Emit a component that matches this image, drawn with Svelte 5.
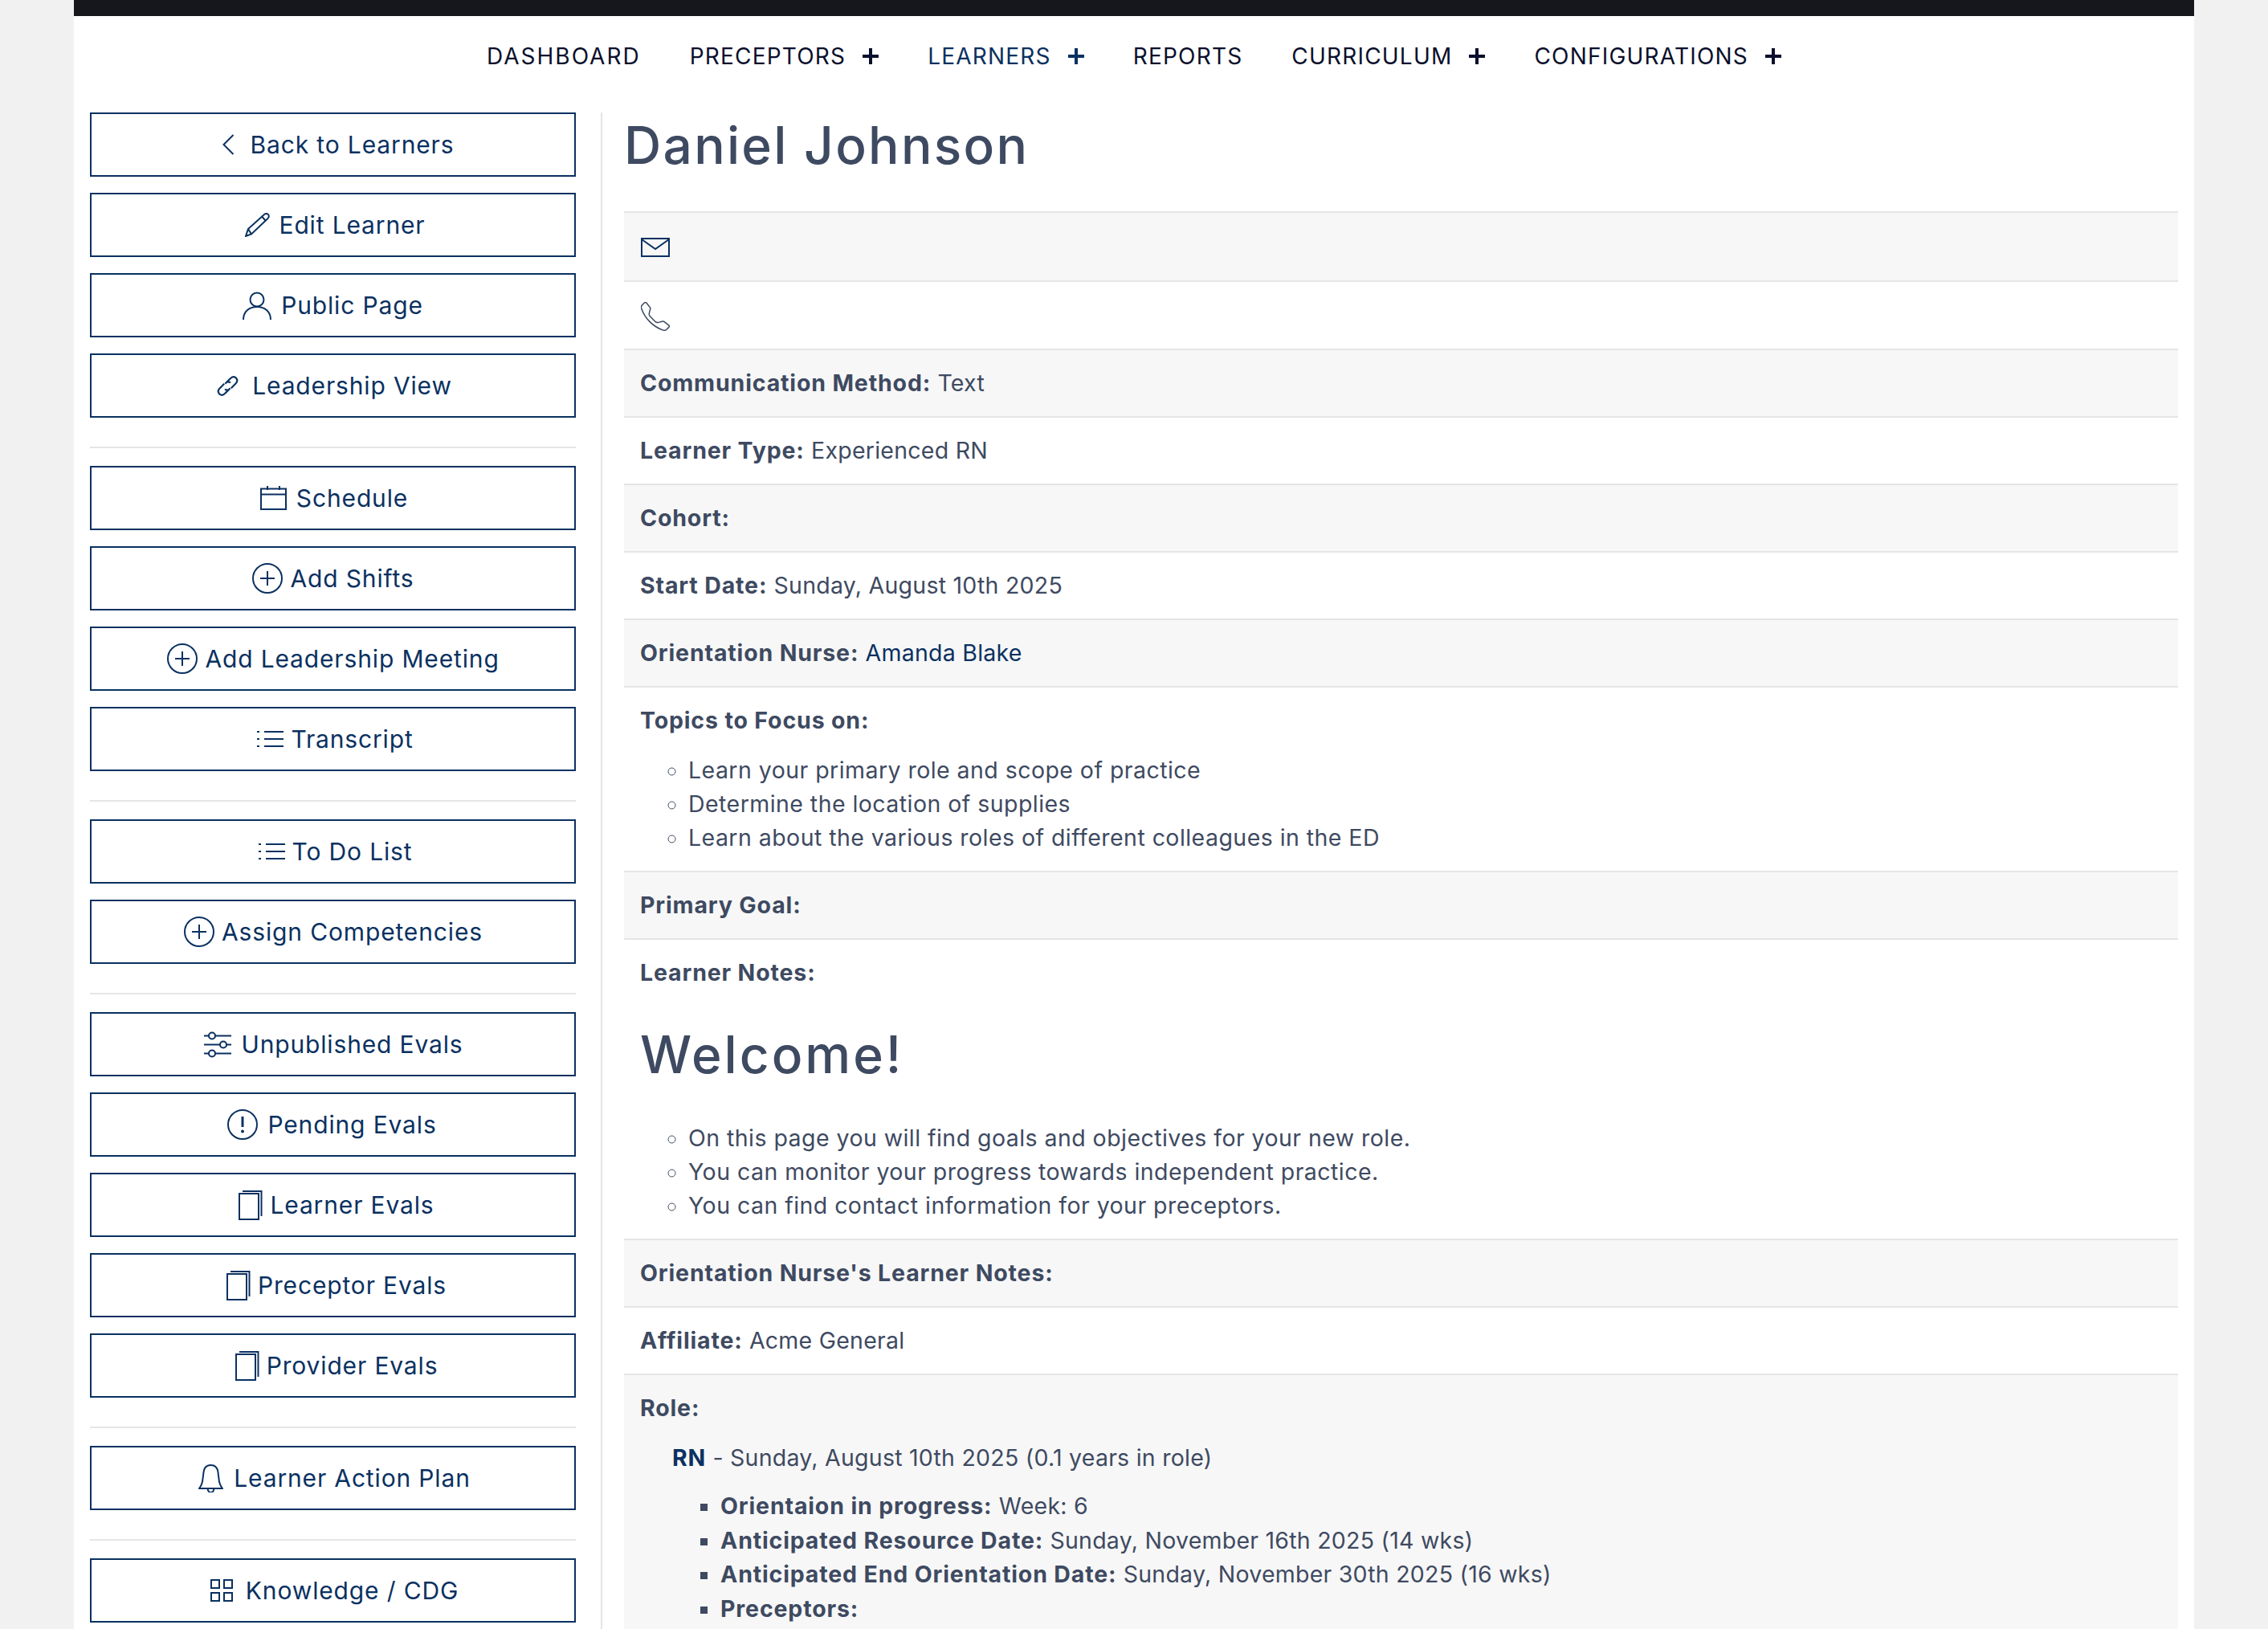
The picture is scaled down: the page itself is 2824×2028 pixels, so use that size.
<script>
	const nav = [
		{ label: 'DASHBOARD' },
		{ label: 'PRECEPTORS', plus: true },
		{ label: 'LEARNERS', plus: true, active: true },
		{ label: 'REPORTS' },
		{ label: 'CURRICULUM', plus: true },
		{ label: 'CONFIGURATIONS', plus: true }
	];

	const groups = [
		[
			{ label: 'Back to Learners', icon: 'back' },
			{ label: 'Edit Learner', icon: 'pencil' },
			{ label: 'Public Page', icon: 'person' },
			{ label: 'Leadership View', icon: 'link' }
		],
		[
			{ label: 'Schedule', icon: 'calendar' },
			{ label: 'Add Shifts', icon: 'plus' },
			{ label: 'Add Leadership Meeting', icon: 'plus' },
			{ label: 'Transcript', icon: 'list' }
		],
		[
			{ label: 'To Do List', icon: 'list' },
			{ label: 'Assign Competencies', icon: 'plus' }
		],
		[
			{ label: 'Unpublished Evals', icon: 'sliders' },
			{ label: 'Pending Evals', icon: 'alert' },
			{ label: 'Learner Evals', icon: 'pages' },
			{ label: 'Preceptor Evals', icon: 'pages' },
			{ label: 'Provider Evals', icon: 'pages' }
		],
		[{ label: 'Learner Action Plan', icon: 'bell' }],
		[{ label: 'Knowledge / CDG', icon: 'grid' }]
	];

	const topics = [
		'Learn your primary role and scope of practice',
		'Determine the location of supplies',
		'Learn about the various roles of different colleagues in the ED'
	];

	const welcome = [
		'On this page you will find goals and objectives for your new role.',
		'You can monitor your progress towards independent practice.',
		'You can find contact information for your preceptors.'
	];
</script>

{#snippet icon(name)}
	{#if name === 'back'}
		<svg class="ic gap-back" width="15" height="26" viewBox="0 0 15 26"><path d="M13.5 1 L1.5 13 L13.5 25" /></svg>
	{:else if name === 'pencil'}
		<svg class="ic" width="31" height="30" viewBox="0 0 31 30"><path d="M1 29 L4 20 L24 2 Q27 0 29 2 Q31 5 28 7.5 L8 26.5 Z M4 20 L8 26.5 M21 4.5 L26 10" /></svg>
	{:else if name === 'person'}
		<svg class="ic" width="36" height="35" viewBox="0 0 36 35"><circle cx="18" cy="10" r="8.5" /><path d="M1 35 C1 25 8 19 18 19 C28 19 35 25 35 35" /></svg>
	{:else if name === 'link'}
		<svg class="ic gap-wide" width="29" height="29" viewBox="0 0 27 27"><path d="M10.5 11 L16.5 5 Q19.5 1.5 23 4 Q26 7.5 23 10.5 L17.5 16 M13 9 Q15.5 8 16.5 10" /><path d="M16.5 16 L10.5 22 Q7.5 25.5 4 23 Q1 19.5 4 16.5 L9.5 11 M14 18 Q11.5 19 10.5 17" /></svg>
	{:else if name === 'calendar'}
		<svg class="ic" width="33" height="30" viewBox="0 0 33 30"><rect x="1" y="3.5" width="31" height="25.5" /><path d="M1 10.5 H32 M9 0 V5 M24 0 V5" /></svg>
	{:else if name === 'plus'}
		<svg class="ic gap-tight" width="38" height="38" viewBox="0 0 38 38"><circle cx="19" cy="19" r="18" /><path d="M19 10 V28 M10 19 H28" /></svg>
	{:else if name === 'list'}
		<svg class="ic gap-tight" width="33" height="22" viewBox="0 0 33 22"><path d="M9 2 H33 M9 11 H33 M9 20 H33 M0 2 H3 M0 11 H3 M0 20 H3" /></svg>
	{:else if name === 'sliders'}
		<svg class="ic" width="34" height="33" viewBox="0 0 34 33"><circle cx="10" cy="5.5" r="4" /><circle cx="24" cy="16.5" r="4" /><circle cx="10" cy="27.5" r="4" /><path d="M0 5.5 H6 M14 5.5 H34 M0 16.5 H20 M28 16.5 H34 M0 27.5 H6 M14 27.5 H34" /></svg>
	{:else if name === 'alert'}
		<svg class="ic" width="38" height="38" viewBox="0 0 38 38"><circle cx="19" cy="19" r="18" /><path class="bang" d="M19 9 V22" /><circle class="dot" cx="19" cy="27.5" r="2" /></svg>
	{:else if name === 'pages'}
		<svg class="ic gap-tight" width="30" height="38" viewBox="0 0 30 38"><rect x="1" y="5" width="24" height="32" /><path d="M5 2 H28.5 V33" /></svg>
	{:else if name === 'bell'}
		<svg class="ic gap-bell" width="31" height="35" viewBox="0 0 31 35"><path d="M1 30 Q5 25 5.5 18 L6.5 10 Q7.5 1 15.5 1 Q23.5 1 24.5 10 L25.5 18 Q26 25 30 30 Z" /><path d="M11.5 30 Q12 35 15.5 35 Q19 35 19.5 30" /></svg>
	{:else if name === 'grid'}
		<svg class="ic gap-wide" width="28" height="28" viewBox="0 0 28 28"><rect x="1" y="1" width="10" height="10" /><rect x="17" y="1" width="10" height="10" /><rect x="1" y="17" width="10" height="10" /><rect x="17" y="17" width="10" height="10" /></svg>
	{/if}
{/snippet}

<div class="page">
	<div class="topbar"></div>

	<nav class="nav">
		{#each nav as item}
			<span class="nav-item" class:active={item.active}>
				{item.label}
				{#if item.plus}
					<svg class="nav-plus" width="20" height="20" viewBox="0 0 20 20"><path d="M10 0 V20 M0 10 H20" /></svg>
				{/if}
			</span>
		{/each}
	</nav>

	<div class="content">
		<aside class="side">
			{#each groups as group, i}
				{#if i > 0}
					<hr class="side-hr" />
				{/if}
				<div class="group">
					{#each group as b}
						<button class="btn">
							{@render icon(b.icon)}
							<span>{b.label}</span>
						</button>
					{/each}
				</div>
			{/each}
		</aside>

		<main class="main">
			<h1>Daniel Johnson</h1>
			<div class="rows">
				<div class="row">
					<svg class="mail" width="36" height="24" viewBox="0 0 36 24"><rect x="1" y="1" width="34" height="22" /><path d="M1 2 L18 14 L35 2" /></svg>
				</div>
				<div class="row">
					<svg class="phone" width="36" height="36" viewBox="0.9 0.9 14.3 14.3"><path d="M3.654 1.328a.678.678 0 0 0-1.015-.063L1.605 2.3c-.483.484-.661 1.169-.45 1.77a17.568 17.568 0 0 0 4.168 6.608 17.569 17.569 0 0 0 6.608 4.168c.601.211 1.286.033 1.77-.45l1.034-1.034a.678.678 0 0 0-.063-1.015l-2.307-1.794a.678.678 0 0 0-.58-.122l-2.19.547a1.745 1.745 0 0 1-1.657-.459L5.482 8.062a1.745 1.745 0 0 1-.46-1.657l.548-2.19a.678.678 0 0 0-.122-.58L3.654 1.328z" /></svg>
				</div>
				<div class="row"><b>Communication Method:</b> Text</div>
				<div class="row"><b>Learner Type:</b> Experienced RN</div>
				<div class="row"><b>Cohort:</b></div>
				<div class="row"><b>Start Date:</b> Sunday, August 10th 2025</div>
				<div class="row"><b>Orientation Nurse:</b> <span class="navy">Amanda Blake</span></div>
				<div class="row">
					<b>Topics to Focus on:</b>
					<ul class="circles">
						{#each topics as t}
							<li>{t}</li>
						{/each}
					</ul>
				</div>
				<div class="row"><b>Primary Goal:</b></div>
				<div class="row">
					<b>Learner Notes:</b>
					<h2>Welcome!</h2>
					<ul class="circles">
						{#each welcome as t}
							<li>{t}</li>
						{/each}
					</ul>
				</div>
				<div class="row"><b>Orientation Nurse's Learner Notes:</b></div>
				<div class="row"><b>Affiliate:</b> Acme General</div>
				<div class="row role">
					<b>Role:</b>
					<div class="role-line"><b class="navy">RN</b> - Sunday, August 10th 2025 (0.1 years in role)</div>
					<ul class="squares">
						<li><b>Orientaion in progress:</b> Week: 6</li>
						<li><b>Anticipated Resource Date:</b> Sunday, November 16th 2025 (14 wks)</li>
						<li><b>Anticipated End Orientation Date:</b> Sunday, November 30th 2025 (16 wks)</li>
						<li><b>Preceptors:</b></li>
					</ul>
				</div>
			</div>
		</main>
	</div>
</div>

<style>
	:global(body) {
		background-color: #f1f1f1;
		overflow: hidden;
	}
	.page {
		width: 2640px;
		height: 2028px;
		margin: 0 auto;
		overflow: hidden;
		background: #fff;
		color: #3e4a61;
		font-family: Inter, 'Open Sans', sans-serif;
		font-size: 28.5px;
		line-height: 42px;
		letter-spacing: 0.25px;
	}
	.topbar {
		height: 20px;
		background: #16161d;
	}
	.nav {
		height: 100px;
		display: flex;
		justify-content: center;
		align-items: center;
		gap: 61px;
		color: #0a0f2c;
		font-size: 28px;
		letter-spacing: 1.2px;
	}
	.nav-item {
		display: inline-flex;
		align-items: center;
		gap: 21px;
	}
	.nav-item:first-child {
		letter-spacing: 2px;
	}
	.nav-item.active {
		color: #0a3161;
	}
	.nav-plus {
		stroke: currentColor;
		stroke-width: 4;
		fill: none;
	}
	.content {
		display: flex;
		margin-top: 20px;
		padding: 0 20px;
	}
	.side {
		width: 605px;
		flex: none;
		padding-right: 31px;
		border-right: 2px solid #e5e5e5;
		box-sizing: content-box;
	}
	.group {
		display: flex;
		flex-direction: column;
		gap: 20px;
	}
	.side-hr {
		height: 2px;
		border: 0;
		background: #e5e5e5;
		margin: 36px 0 22px;
	}
	/* label sits on a fixed centre, icon hangs off its left side */
	.btn {
		height: 80px;
		display: grid;
		grid-template-columns: 1fr auto 1fr;
		align-items: center;
		background: #fff;
		border: 2px solid #0a3161;
		color: #0a3161;
		font: inherit;
		font-size: 30px;
		letter-spacing: 0.85px;
		padding: 0 0 0 48px;
	}
	.ic {
		justify-self: end;
		margin-right: 12px;
		stroke: #0a3161;
		stroke-width: 2;
		fill: none;
	}
	.gap-back {
		margin-right: 20px;
	}
	.gap-wide {
		margin-right: 16px;
	}
	.gap-tight {
		margin-right: 9px;
	}
	.gap-bell {
		margin-right: 13px;
	}
	.bang {
		stroke-width: 3;
	}
	.dot {
		fill: #0a3161;
		stroke: none;
	}
	.main {
		flex: 1;
		padding-left: 27px;
		min-width: 0;
	}
	h1,
	h2 {
		font-size: 64px;
		line-height: 76px;
		font-weight: 500;
		margin: 0;
	}
	h1 {
		margin: 3px 0 44px 0;
		letter-spacing: 2.3px;
	}
	h2 {
		margin: 43px 0 45px;
		letter-spacing: 3px;
	}
	.rows {
		border-top: 2px solid #e5e5e5;
	}
	.row {
		padding: 20px;
		border-bottom: 2px solid #e5e5e5;
	}
	.row:nth-child(odd) {
		background: #f7f7f7;
	}
	.row svg {
		display: block;
	}
	.mail {
		margin: 11px 0 8.6px 1px;
		stroke: #0a3161;
		stroke-width: 2;
		fill: none;
	}
	.phone {
		margin: 5px 0 2.6px 1px;
		stroke: #3e4a61;
		stroke-width: 0.6;
		fill: none;
	}
	b {
		font-weight: 700;
		letter-spacing: 0.85px;
	}
	.navy {
		color: #0a3161;
	}
	ul {
		margin: 0;
		padding: 0;
	}
	.circles {
		list-style: circle;
		padding-left: 60px;
		margin-top: 20px;
		letter-spacing: 0.45px;
	}
	.role-line {
		margin: 20px 0 18px 40px;
	}
	.squares {
		list-style: square;
		margin-left: 100px;
		line-height: 42.6px;
	}
</style>
